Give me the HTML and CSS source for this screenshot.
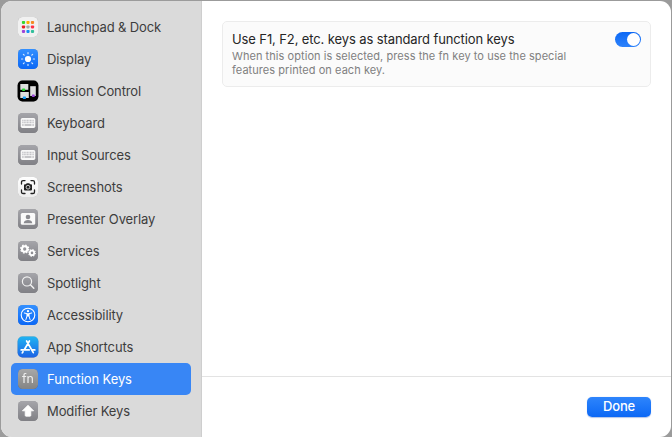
FILE: index.html
```html
<!DOCTYPE html>
<html lang="en">
<head>
<meta charset="utf-8">
<title>Keyboard Shortcuts</title>
<link rel="stylesheet" href="styles.css">
</head>
<body>
<svg class="defs" aria-hidden="true">
  <defs>
    <linearGradient id="grey" x1="0" y1="0" x2="0" y2="1"><stop offset="0" stop-color="#a5a5aa"/><stop offset="1" stop-color="#808085"/></linearGradient>
    <linearGradient id="blue" x1="0" y1="0" x2="0" y2="1"><stop offset="0" stop-color="#3390ff"/><stop offset="1" stop-color="#0c68f5"/></linearGradient>
    <linearGradient id="store" x1="0" y1="0" x2="0" y2="1"><stop offset="0" stop-color="#20b4f2"/><stop offset="1" stop-color="#1b62e5"/></linearGradient>
    <linearGradient id="white" x1="0" y1="0" x2="0" y2="1"><stop offset="0" stop-color="#fff"/><stop offset="1" stop-color="#ededed"/></linearGradient>
    <linearGradient id="fnkey" x1="0" y1="0" x2="0" y2="1"><stop offset="0" stop-color="#a8a8a8"/><stop offset="1" stop-color="#848484"/></linearGradient>
    <symbol id="keys" viewBox="0 0 22 22">
      <rect x="1" y="1" width="20" height="20" rx="4.6" fill="url(#grey)"/>
      <rect x="3.7" y="6" width="14.6" height="9.9" rx="1.7" fill="#f8f8f8"/>
      <path d="M5.2 8.4H16.8M5.2 10.4H16.8" stroke="#c4c4c8" stroke-width="1.5" stroke-dasharray="1.1 .45"/>
      <path d="M5.2 13H6.6M7.5 13H14.5M15.4 13H16.8" stroke="#b4b4b8" stroke-width="1.5"/>
    </symbol>
  </defs>
</svg>
<div class="window">
  <nav class="sidebar">
    <a class="item"><svg class="icon" viewBox="0 0 22 22"><rect x="1" y="1" width="20" height="20" rx="4.6" fill="#f1f1f1"/>
      <g><rect x="4.9" y="4.9" width="3.2" height="3" rx=".8" fill="#35d62f"/><rect x="9.4" y="4.9" width="3.2" height="3" rx=".8" fill="#ffb000"/><rect x="13.9" y="4.9" width="3.2" height="3" rx=".8" fill="#f58a25"/>
      <rect x="4.9" y="9.4" width="3.2" height="3" rx=".8" fill="#e81e24"/><rect x="9.4" y="9.4" width="3.2" height="3" rx=".8" fill="#a4a9a6"/><rect x="13.9" y="9.4" width="3.2" height="3" rx=".8" fill="#ff3048"/>
      <rect x="4.9" y="13.9" width="3.2" height="3" rx=".8" fill="#a044d8"/><rect x="9.4" y="13.9" width="3.2" height="3" rx=".8" fill="#1590f5"/><rect x="13.9" y="13.9" width="3.2" height="3" rx=".8" fill="#31bf9b"/></g></svg><span>Launchpad &amp; Dock</span></a>
    <a class="item"><svg class="icon" viewBox="0 0 22 22"><rect x="1" y="1" width="20" height="20" rx="4.6" fill="url(#blue)"/>
      <circle cx="11" cy="11" r="3.1" fill="#fff"/><path d="M11 4.5v1.2M11 16.3v1.2M4.5 11h1.2M16.3 11h1.2M6.4 6.4l.8.8M14.8 14.8l.8.8M6.4 15.6l.8-.8M14.8 7.2l.8-.8" stroke="#d5e7ff" stroke-width="1.2" stroke-linecap="round"/></svg><span>Display</span></a>
    <a class="item"><svg class="icon" viewBox="0 0 22 22"><rect x=".6" y=".6" width="20.8" height="20.8" rx="4.8" fill="#000"/>
      <rect x="3.3" y="4" width="8" height="5.8" fill="#dedede"/><rect x="3.3" y="12" width="8.5" height="6" fill="#dedede"/><rect x="13.2" y="6.2" width="5.6" height="9.8" fill="#dedede"/>
      <rect x="5" y="8.4" width="3.2" height="2.5" rx=".8" fill="#28db35"/><rect x="5.8" y="16.6" width="3.2" height="2.5" rx=".8" fill="#189dfa"/><rect x="14.8" y="14.6" width="3" height="2.5" rx=".8" fill="#9945d5"/></svg><span>Mission Control</span></a>
    <a class="item"><svg class="icon"><use href="#keys"/></svg><span>Keyboard</span></a>
    <a class="item"><svg class="icon"><use href="#keys"/></svg><span>Input Sources</span></a>
    <a class="item"><svg class="icon" viewBox="0 0 22 22"><rect x="1" y="1" width="20" height="20" rx="4.6" fill="url(#white)"/>
      <path d="M4.5 8V6.2Q4.5 4.6 6.1 4.6H8M14 4.6h1.9Q17.5 4.6 17.5 6.2V8M17.5 14v1.9q0 1.6-1.6 1.6H14M8 17.5H6.1q-1.6 0-1.6-1.6V14" fill="none" stroke="#222" stroke-width="1.3" stroke-linecap="round"/>
      <path d="M8 8.2h1l.7-1h2.6l.7 1h1q1 0 1 1v4.4q0 1-1 1H8q-1 0-1-1V9.200q0-1 1-1z" fill="#202020"/><circle cx="11" cy="11.2" r="1.9" fill="#222" stroke="#eee" stroke-width=".8"/></svg><span>Screenshots</span></a>
    <a class="item"><svg class="icon" viewBox="0 0 22 22"><rect x="1" y="1" width="20" height="20" rx="4.6" fill="url(#grey)"/>
      <rect x="3.8" y="5" width="14.4" height="11.8" rx="1.6" fill="#fafafa"/><circle cx="11" cy="9" r="2.3" fill="#8b8b90"/><path d="M6.7 15.2c.2-2.2 2-3.2 4.3-3.2s4.100 1 4.300 3.200z" fill="#8b8b90"/></svg><span>Presenter Overlay</span></a>
    <a class="item"><svg class="icon" viewBox="0 0 22 22"><rect x="1" y="1" width="20" height="20" rx="4.6" fill="url(#grey)"/>
      <g fill="none" stroke="#fff"><circle cx="7.700" cy="9" r="2.700" stroke-width="2.1"/><circle cx="7.7" cy="9" r="4" stroke-width="1.3" stroke-dasharray="1.6 1.542"/>
      <circle cx="15" cy="12.900" r="2.200" stroke-width="1.8"/><circle cx="15" cy="12.9" r="3.3" stroke-width="1.1" stroke-dasharray="1.3 1.292"/></g></svg><span>Services</span></a>
    <a class="item"><svg class="icon" viewBox="0 0 22 22"><rect x="1" y="1" width="20" height="20" rx="4.6" fill="url(#grey)"/>
      <circle cx="10" cy="9.4" r="4.6" fill="none" stroke="#f1f1f1" stroke-width="1.2"/><path d="M13.4 12.8l3.4 3.5" stroke="#f1f1f1" stroke-width="1.5" stroke-linecap="round"/></svg><span>Spotlight</span></a>
    <a class="item"><svg class="icon" viewBox="0 0 22 22"><rect x="1" y="1" width="20" height="20" rx="4.6" fill="url(#blue)"/>
      <circle cx="11" cy="11" r="6.8" fill="none" stroke="#fff" stroke-width="1.1"/><circle cx="11" cy="7.2" r="1.15" fill="#fff"/><path d="M7.3 9l2.8.7v2.2l-1.2 3.6M14.7 9l-2.8.7v2.2l1.2 3.6" fill="none" stroke="#fff" stroke-width="1" stroke-linecap="round" stroke-linejoin="round"/><path d="M9.7 9.3h2.6v3.1H9.7z" fill="#fff"/></svg><span>Accessibility</span></a>
    <a class="item"><svg class="icon" viewBox="0 0 22 22"><rect x=".6" y=".6" width="20.8" height="20.8" rx="4.8" fill="url(#store)"/>
      <path d="M9.6 5l6.700 11.700M12.400 5L7.3 13.700M4.200 13.900h8M15.2 13.900h2.600M6 15.7l-.7 1.200" fill="none" stroke="#fff" stroke-width="1.7" stroke-linecap="round"/></svg><span>App Shortcuts</span></a>
    <a class="item selected"><svg class="icon" viewBox="0 0 22 22"><rect x="1" y="1" width="20" height="20" rx="4.6" fill="url(#fnkey)"/><text class="fn" x="11" y="15" text-anchor="middle">fn</text></svg><span>Function Keys</span></a>
    <a class="item"><svg class="icon" viewBox="0 0 22 22"><rect x="1" y="1" width="20" height="20" rx="4.6" fill="url(#grey)"/>
      <path d="M11 5.2l5.6 5.6h-2.8v4.6q0 .8-.8.8H9q-.8 0-.8-.8v-4.6H5.4z" fill="#fff" stroke="#fff" stroke-width=".8" stroke-linejoin="round"/></svg><span>Modifier Keys</span></a>
  </nav>
  <main class="pane">
    <section class="content">
      <div class="card">
        <div class="copy">
          <div class="title">Use F1, F2, etc. keys as standard function keys</div>
          <div class="note">When this option is selected, press the fn key to use the special<br>features printed on each key.</div>
        </div>
        <div class="switch"><div class="knob"></div></div>
      </div>
    </section>
    <footer class="footer"><button class="done">Done</button></footer>
  </main>
</div>
</body>
</html>
```
FILE: styles.css
```css
* { box-sizing: border-box; }
html, body { margin: 0; height: 100%; }
body {
  padding: 1px 1px 0;
  background: #9b9b9b;
  font-family: Inter, "Liberation Sans", sans-serif;
  font-size: 13px;
  overflow: hidden;
}
.defs { position: absolute; width: 0; height: 0; }
.window {
  display: flex;
  height: 436px;
  border-radius: 11px;
  overflow: hidden;
  background: #fff;
}
.sidebar {
  width: 201px;
  padding: 10px;
  background: #dadada;
  border-right: 1px solid #cecece;
}
.item {
  display: flex;
  align-items: center;
  gap: 8px;
  width: 180px;
  height: 32px;
  padding-left: 6px;
  border-radius: 5px;
  color: #3d3d3d;
  letter-spacing: -.11px;
  white-space: nowrap;
}
.item.selected { background: #3886f5; color: #fff; }
.icon {
  flex: none;
  width: 22px;
  height: 22px;
  filter: drop-shadow(0 .6px .5px rgba(0, 0, 0, .3));
}
.fn { font-size: 12.5px; letter-spacing: 0; fill: #eee; }
.pane { flex: 1; display: flex; flex-direction: column; }
.content { flex: 1; padding: 20px 20px 0; }
.card {
  display: flex;
  justify-content: space-between;
  height: 66px;
  padding: 9px 9px 0;
  border: 1px solid #ececec;
  border-radius: 5px;
  background: #fbfbfb;
}
.copy { white-space: nowrap; }
.title { line-height: 16px; letter-spacing: -.11px; color: #262626; }
.note { margin-top: 2px; font-size: 11px; line-height: 14px; letter-spacing: .055px; color: #808080; }
.switch {
  width: 26px;
  height: 15px;
  margin-top: 1px;
  padding: 1px;
  border-radius: 8px;
  background: linear-gradient(#0c68f5, #2d82fb);
}
.knob {
  width: 13px;
  height: 13px;
  margin-left: auto;
  border-radius: 50%;
  background: #fff;
}
.footer {
  display: flex;
  justify-content: flex-end;
  height: 61px;
  padding: 20px 20px 0 0;
  border-top: 1px solid #e3e3e3;
}
.done {
  width: 64px;
  height: 20px;
  padding: 0 0 1px;
  border: 0;
  border-radius: 5px;
  background: linear-gradient(#2e85fc, #0c68f5);
  box-shadow: 0 .5px 1px rgba(0, 60, 180, .3);
  color: #fff;
  font: 500 13px/19px Inter, sans-serif;
  letter-spacing: -.2px;
}
```
